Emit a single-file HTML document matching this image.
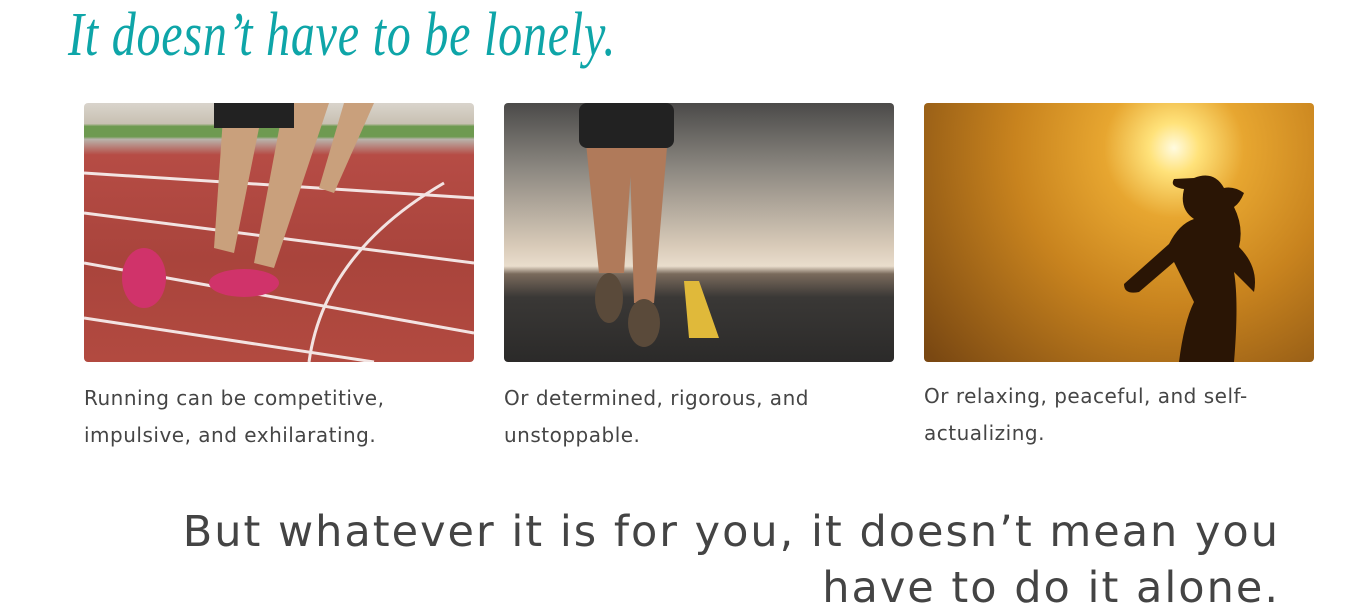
<!DOCTYPE html>
<html><head><meta charset="utf-8"><style>
html,body{margin:0;padding:0;background:#fff;width:1366px;height:615px;overflow:hidden;position:relative}
.h{position:absolute;left:68px;top:0px;font-family:"Liberation Serif",serif;font-style:italic;font-size:62px;color:#0ea5a8;white-space:nowrap;transform-origin:0 0;transform:scaleX(0.775);letter-spacing:1px}
.img{position:absolute;top:103px;width:390px;height:259px;border-radius:4px;overflow:hidden}
.cap{position:absolute;top:380px;width:390px;font-family:"DejaVu Sans",sans-serif;font-size:20px;line-height:37px;color:#454545;letter-spacing:0.5px}
.big{position:absolute;right:86px;top:504px;width:1150px;text-align:right;font-family:"DejaVu Sans",sans-serif;font-size:43px;line-height:56px;color:#444;letter-spacing:2px}
</style></head><body>
<div class="h">It doesn’t have to be lonely.</div>

<div class="img" style="left:84px;background:linear-gradient(180deg,#d9d4cc 0%,#c8c0b2 8%,#6e9a50 9%,#6e9a50 13%,#b9b3ab 14%,#b64c45 20%,#a9443c 60%,#b24a40 100%)">
<svg width="390" height="259" style="position:absolute;left:0;top:0"><g stroke="#fff" stroke-width="3" fill="none" opacity=".85"><path d="M0 70 L390 95"/><path d="M0 110 L390 160"/><path d="M0 160 L390 230"/><path d="M0 215 L290 259"/><path d="M225 259 Q240 150 360 80"/></g>
<g fill="#c9a07c"><path d="M140 0 h40 l-30 150 -20 -5z"/><path d="M200 0 h45 l-55 165 -20 -5z"/><path d="M260 0 h30 l-40 90 -15 -5z"/></g>
<g fill="#d0336a"><ellipse cx="60" cy="175" rx="22" ry="30"/><ellipse cx="160" cy="180" rx="35" ry="14"/></g>
<rect x="130" y="0" width="80" height="25" fill="#222"/></svg></div>

<div class="img" style="left:504px;background:linear-gradient(180deg,#4b4a49 0%,#8b8780 25%,#d8cab8 55%,#e9ddcc 63%,#7a6a5c 66%,#3a3836 75%,#2b2a29 100%)">
<svg width="390" height="259" style="position:absolute;left:0;top:0"><path d="M180 178 L195 178 L215 235 L185 235Z" fill="#e0b93a"/>
<g fill="#b07a5a"><path d="M80 20 h50 l-10 150 h-25z"/><path d="M125 20 h40 l-15 180 h-20z"/></g>
<rect x="75" y="0" width="95" height="45" rx="8" fill="#222"/>
<ellipse cx="105" cy="195" rx="14" ry="25" fill="#5a4a3a"/><ellipse cx="140" cy="220" rx="16" ry="24" fill="#5a4a3a"/></svg></div>

<div class="img" style="left:924px;background:radial-gradient(circle at 250px 45px,#fffbe0 0,#ffe27a 25px,#e7a630 70px,#c8831e 160px,#7a4812 320px)">
<svg width="390" height="259" style="position:absolute;left:0;top:0"><path d="M270 75 q20 -8 30 10 q10 -2 20 5 q-4 10 -10 14 q10 20 5 40 q20 20 15 45 l-20 -20 q5 30 0 90 h-55 q5 -40 15 -60 q-10 -20 -20 -40 l-35 30 q-15 3 -15 -8 l45 -40 q10 -20 25 -25 q-15 -10 -10 -30 q-15 -2 -10 -10z" fill="#2a1505"/></svg></div>

<div class="cap" style="left:84px">Running can be competitive, impulsive, and exhilarating.</div>
<div class="cap" style="left:504px">Or determined, rigorous, and unstoppable.</div>
<div class="cap" style="left:924px;top:378px">Or relaxing, peaceful, and self-actualizing.</div>

<div class="big">But whatever it is for you, it doesn’t mean you<br>have to do it alone.</div>
</body></html>
